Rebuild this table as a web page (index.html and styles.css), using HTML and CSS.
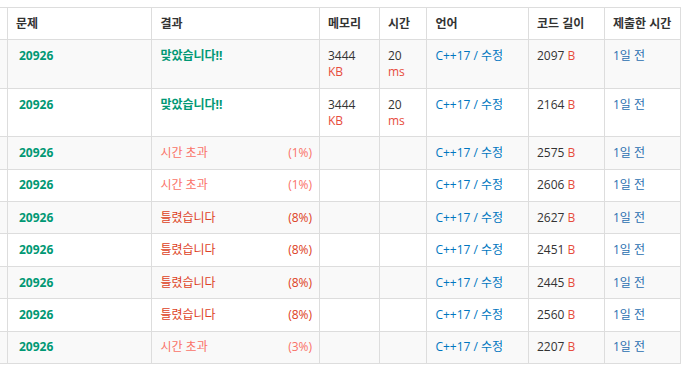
FILE: index.html
```html
<!DOCTYPE html>
<html lang="ko">
<head>
<meta charset="utf-8">
<link rel="stylesheet" href="styles.css">
</head>
<body>
<div class="wrap">
<table class="status">
<colgroup>
<col class="c0"><col class="c1"><col class="c2"><col class="c3"><col class="c4"><col class="c5"><col class="c6"><col class="c7">
</colgroup>
<thead>
<tr><th></th><th>문제</th><th>결과</th><th>메모리</th><th>시간</th><th>언어</th><th>코드 길이</th><th>제출한 시간</th></tr>
</thead>
<tbody>
<tr><td></td><td><a class="pid">20926</a></td><td><span class="ac">맞았습니다!!</span></td><td>3444<br><span class="unit">KB</span></td><td>20<br><span class="unit">ms</span></td><td class="lang">C++17 / 수정</td><td>2097 <span class="unit">B</span></td><td class="when">1일 전</td></tr>
<tr><td></td><td><a class="pid">20926</a></td><td><span class="ac">맞았습니다!!</span></td><td>3444<br><span class="unit">KB</span></td><td>20<br><span class="unit">ms</span></td><td class="lang">C++17 / 수정</td><td>2164 <span class="unit">B</span></td><td class="when">1일 전</td></tr>
<tr><td></td><td><a class="pid">20926</a></td><td class="res tle"><span>시간 초과</span><span class="pct">(1%)</span></td><td></td><td></td><td class="lang">C++17 / 수정</td><td>2575 <span class="unit">B</span></td><td class="when">1일 전</td></tr>
<tr><td></td><td><a class="pid">20926</a></td><td class="res tle"><span>시간 초과</span><span class="pct">(1%)</span></td><td></td><td></td><td class="lang">C++17 / 수정</td><td>2606 <span class="unit">B</span></td><td class="when">1일 전</td></tr>
<tr><td></td><td><a class="pid">20926</a></td><td class="res wa"><span>틀렸습니다</span><span class="pct">(8%)</span></td><td></td><td></td><td class="lang">C++17 / 수정</td><td>2627 <span class="unit">B</span></td><td class="when">1일 전</td></tr>
<tr><td></td><td><a class="pid">20926</a></td><td class="res wa"><span>틀렸습니다</span><span class="pct">(8%)</span></td><td></td><td></td><td class="lang">C++17 / 수정</td><td>2451 <span class="unit">B</span></td><td class="when">1일 전</td></tr>
<tr><td></td><td><a class="pid">20926</a></td><td class="res wa"><span>틀렸습니다</span><span class="pct">(8%)</span></td><td></td><td></td><td class="lang">C++17 / 수정</td><td>2445 <span class="unit">B</span></td><td class="when">1일 전</td></tr>
<tr><td></td><td><a class="pid">20926</a></td><td class="res wa"><span>틀렸습니다</span><span class="pct">(8%)</span></td><td></td><td></td><td class="lang">C++17 / 수정</td><td>2560 <span class="unit">B</span></td><td class="when">1일 전</td></tr>
<tr><td></td><td><a class="pid">20926</a></td><td class="res tle"><span>시간 초과</span><span class="pct">(3%)</span></td><td></td><td></td><td class="lang">C++17 / 수정</td><td>2207 <span class="unit">B</span></td><td class="when">1일 전</td></tr>
</tbody>
</table>
</div>
</body>
</html>
```
FILE: styles.css
```css
html, body {
  margin: 0;
  padding: 0;
  background: #fff;
}
.wrap {
  padding-top: 7px;
  width: 685px;
  overflow: hidden;
}
.status {
  border-collapse: collapse;
  table-layout: fixed;
  width: 713px;
  margin-left: -33px;
  font-family: "Open Sans", "Noto Sans CJK KR", sans-serif;
  font-size: 12px;
  line-height: 16px;
  color: #333;
}
.c0 { width: 40px; }
.c1 { width: 144.4px; }
.c2 { width: 167.6px; }
.c3 { width: 60px; }
.c4 { width: 47.4px; }
.c5 { width: 101.6px; }
.c6 { width: 76px; }
.c7 { width: 75.7px; }
.status th,
.status td {
  border: 1px solid #ddd;
  padding: 7.8px 8px 7.6px;
  text-align: left;
  vertical-align: top;
}
.status th {
  font-weight: bold;
  vertical-align: middle;
}
.status tbody tr:nth-child(odd) {
  background: #f9f9f9;
}
.pid {
  color: #009874;
  font-weight: bold;
  margin-left: 3px;
}
.ac {
  color: #009874;
  font-weight: bold;
}
.pct {
  float: right;
  margin-right: -1px;
}
.tle { color: #fa7268; }
.wa { color: #dd4124; }
.unit { color: #e74c3c; }
.lang { color: #0076c0; }
.when { color: #2a6fb0; }
```
